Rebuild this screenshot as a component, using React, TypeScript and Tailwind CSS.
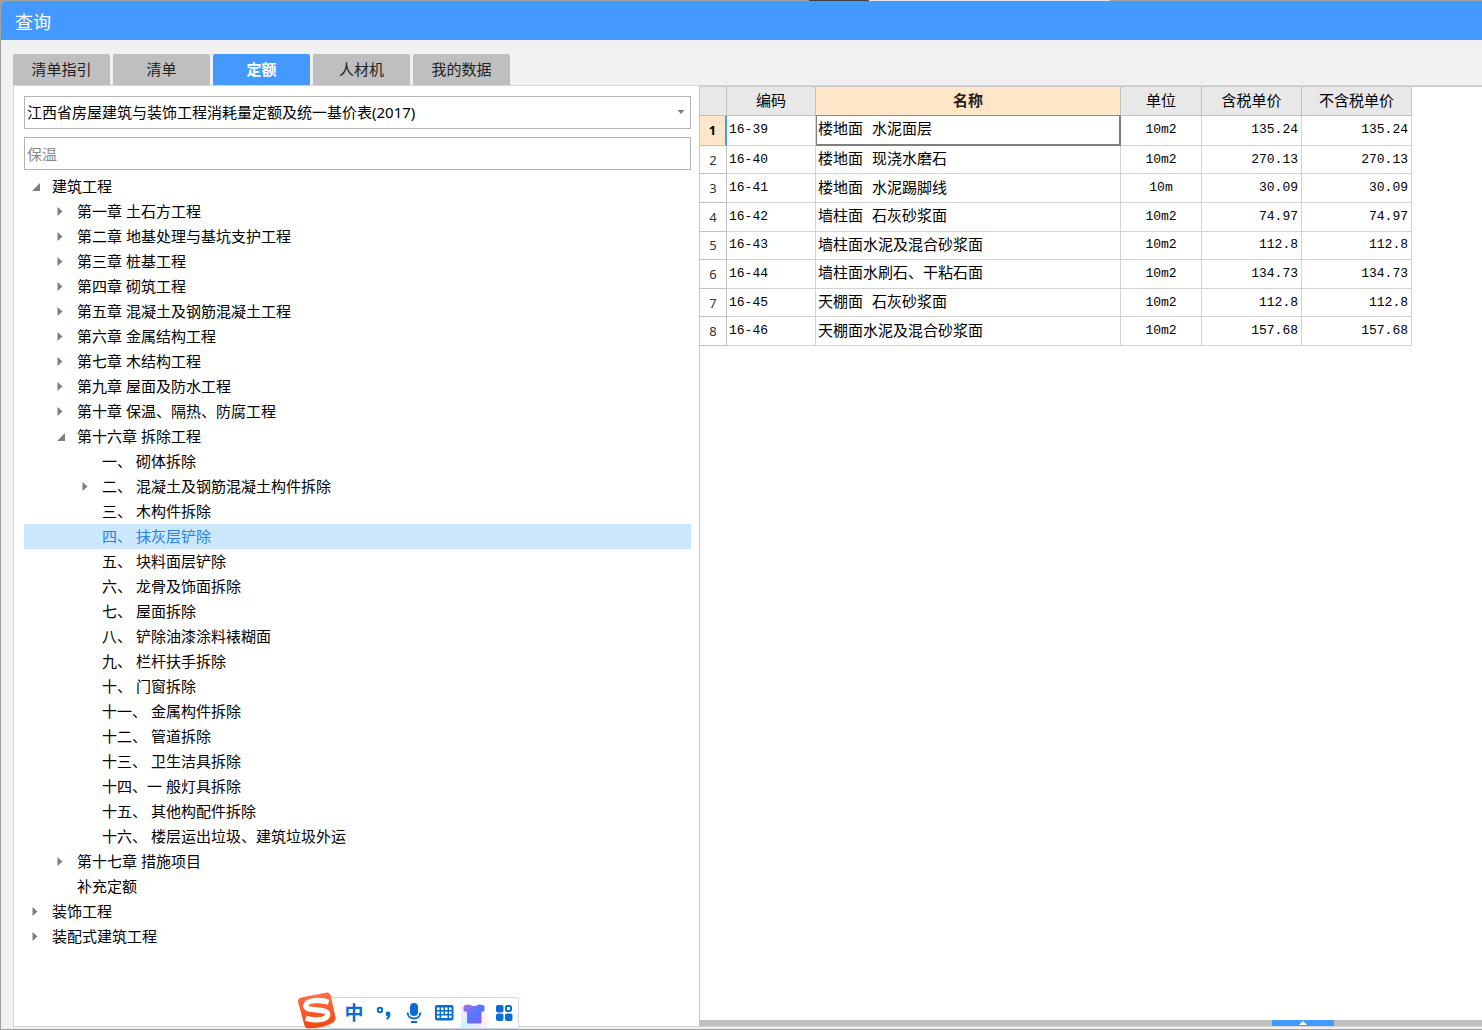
import { useState } from 'react';
import clsx from 'clsx';

const tabs = ['清单指引', '清单', '定额', '人材机', '我的数据'];

type TreeRow = {
  label: string;
  level: 0 | 1 | 2;
  state?: 'open' | 'closed';
};

const tree: TreeRow[] = [
  { label: '建筑工程', level: 0, state: 'open' },
  { label: '第一章 土石方工程', level: 1, state: 'closed' },
  { label: '第二章 地基处理与基坑支护工程', level: 1, state: 'closed' },
  { label: '第三章 桩基工程', level: 1, state: 'closed' },
  { label: '第四章 砌筑工程', level: 1, state: 'closed' },
  { label: '第五章 混凝土及钢筋混凝土工程', level: 1, state: 'closed' },
  { label: '第六章 金属结构工程', level: 1, state: 'closed' },
  { label: '第七章 木结构工程', level: 1, state: 'closed' },
  { label: '第九章 屋面及防水工程', level: 1, state: 'closed' },
  { label: '第十章 保温、隔热、防腐工程', level: 1, state: 'closed' },
  { label: '第十六章 拆除工程', level: 1, state: 'open' },
  { label: '一、 砌体拆除', level: 2 },
  { label: '二、 混凝土及钢筋混凝土构件拆除', level: 2, state: 'closed' },
  { label: '三、 木构件拆除', level: 2 },
  { label: '四、 抹灰层铲除', level: 2 },
  { label: '五、 块料面层铲除', level: 2 },
  { label: '六、 龙骨及饰面拆除', level: 2 },
  { label: '七、 屋面拆除', level: 2 },
  { label: '八、 铲除油漆涂料裱糊面', level: 2 },
  { label: '九、 栏杆扶手拆除', level: 2 },
  { label: '十、 门窗拆除', level: 2 },
  { label: '十一、 金属构件拆除', level: 2 },
  { label: '十二、 管道拆除', level: 2 },
  { label: '十三、 卫生洁具拆除', level: 2 },
  { label: '十四、一 般灯具拆除', level: 2 },
  { label: '十五、 其他构配件拆除', level: 2 },
  { label: '十六、 楼层运出垃圾、建筑垃圾外运', level: 2 },
  { label: '第十七章 措施项目', level: 1, state: 'closed' },
  { label: '补充定额', level: 1 },
  { label: '装饰工程', level: 0, state: 'closed' },
  { label: '装配式建筑工程', level: 0, state: 'closed' },
];

const quotas = [
  { code: '16-39', name: '楼地面 水泥面层', unit: '10m2', price: '135.24' },
  { code: '16-40', name: '楼地面 现浇水磨石', unit: '10m2', price: '270.13' },
  { code: '16-41', name: '楼地面 水泥踢脚线', unit: '10m', price: '30.09' },
  { code: '16-42', name: '墙柱面 石灰砂浆面', unit: '10m2', price: '74.97' },
  { code: '16-43', name: '墙柱面水泥及混合砂浆面', unit: '10m2', price: '112.8' },
  { code: '16-44', name: '墙柱面水刷石、干粘石面', unit: '10m2', price: '134.73' },
  { code: '16-45', name: '天棚面 石灰砂浆面', unit: '10m2', price: '112.8' },
  { code: '16-46', name: '天棚面水泥及混合砂浆面', unit: '10m2', price: '157.68' },
];

const indent = {
  0: 'pl-[7px]',
  1: 'pl-8',
  2: 'pl-[57px]',
};

function Arrow({ state }: { state?: 'open' | 'closed' }) {
  return (
    <svg className="h-3 w-3 shrink-0" viewBox="0 0 12 12" fill="#7f7f7f">
      {state === 'open' && <path d="M9 3v8H1z" />}
      {state === 'closed' && <path d="M1.500 2v9L6.500 6.500z" />}
    </svg>
  );
}

function QuotaTree() {
  const [selected, setSelected] = useState(14);

  return (
    <ul className="mt-1">
      {tree.map((row, i) => (
        <li key={row.label}>
          <button
            className={clsx(
              'flex h-[25px] w-full items-center gap-[9px] pb-[2px] text-left whitespace-nowrap',
              indent[row.level],
              i === selected ? 'bg-[#cce8ff] text-[#2680eb]' : 'text-black'
            )}
            onClick={() => setSelected(i)}
            type="button"
          >
            <Arrow state={row.state} />
            {row.label}
          </button>
        </li>
      ))}
    </ul>
  );
}

function QuotaTable() {
  const th =
    'border-r border-b border-[#c0c0c0] bg-[#e8e8e8] pb-[2px] font-normal';
  const td = 'border-r border-b border-[#d2d2d2]';
  const mono =
    "font-['Liberation_Mono','Noto_Sans_CJK_SC',monospace] text-[13px]";

  return (
    <table className="h-[259px] w-[712px] table-fixed border-separate border-spacing-0 text-black">
      <colgroup>
        <col className="w-[27px]" />
        <col className="w-[89px]" />
        <col className="w-[305px]" />
        <col className="w-[81px]" />
        <col className="w-[100px]" />
        <col className="w-[110px]" />
      </colgroup>
      <thead>
        <tr className="h-[29px]">
          <th className={th} aria-label="序号" />
          <th className={th}>编码</th>
          <th className="border-r border-b border-r-[#c0c0c0] border-b-[#4499ff] bg-[#ffe6c8] pb-[2px] font-bold text-[#222]">
            名称
          </th>
          <th className={th}>单位</th>
          <th className={th}>含税单价</th>
          <th className={th}>不含税单价</th>
        </tr>
      </thead>
      <tbody>
        {quotas.map((q, i) => (
          <tr key={q.code}>
            <th
              className={clsx(
                'border-b border-[#c0c0c0] text-[13px]',
                i === 0
                  ? 'border-r-2 border-r-[#4499ff] bg-[#ffe6c8] font-bold'
                  : 'border-r font-normal text-[#333]'
              )}
              scope="row"
            >
              {i + 1}
            </th>
            <td className={clsx(td, mono, 'pl-[2px]')}>{q.code}</td>
            <td
              className={clsx(
                "pt-[3px] font-['Liberation_Mono','Noto_Sans_CJK_SC',monospace] whitespace-nowrap",
                i === 0
                  ? 'border-r-2 border-b-2 border-l border-[#7f7f7f] pl-px'
                  : 'border-r border-b border-[#d2d2d2] pl-[2px]'
              )}
            >
              {q.name}
            </td>
            <td className={clsx(td, mono, 'text-center')}>{q.unit}</td>
            <td className={clsx(td, mono, 'pr-[3px] text-right')}>{q.price}</td>
            <td className={clsx(td, mono, 'pr-[3px] text-right')}>{q.price}</td>
          </tr>
        ))}
      </tbody>
    </table>
  );
}

function ImeBar() {
  return (
    <div className="absolute bottom-0 left-[296px] flex h-[37px] items-end">
      <svg className="z-10 h-[37px] w-10 shrink-0" viewBox="0 0 40 38">
        <defs>
          <linearGradient id="sogou" x1="0" y1="0" x2="0" y2="1">
            <stop offset="0" stopColor="#ff7044" />
            <stop offset="1" stopColor="#f04810" />
          </linearGradient>
        </defs>
        <path
          d="M3 6 30 .5Q33 0 34 3L39 26Q39.500 29 37 31Q27 37 11 37.500Q8 37.500 7 34L.5 10Q0 7 3 6Z"
          fill="url(#sogou)"
        />
        <path
          d="M32 10.500C24 7.500 8.500 8 8.500 14.500C8.500 20.500 31 16 31 23C31 29 17 30 8.500 27"
          fill="none"
          stroke="#fff"
          strokeWidth="5.500"
        />
      </svg>
      <div className="-ml-2 flex h-8 w-[190px] items-center justify-between rounded-xs border border-[#c8d8ee] bg-white pr-[4px] pl-[14px] text-[#0a6cd6]">
        <span className="w-5 text-center text-[19px] leading-5 font-bold">中</span>
        <svg className="h-5 w-5" viewBox="0 0 20 20" fill="none" stroke="currentColor">
          <circle cx="6" cy="7" r="2.200" strokeWidth="2" />
          <circle cx="14" cy="11" r="2.400" fill="currentColor" stroke="none" />
          <path d="M15.400 11.500Q15.500 14.500 12.500 16" strokeWidth="2" />
        </svg>
        <svg className="h-5 w-5" viewBox="0 0 20 20" fill="none" stroke="currentColor" strokeWidth="2">
          <rect x="6" y="0" width="8" height="13" rx="4" fill="currentColor" stroke="none" />
          <path d="M3.500 9.500C4 17.500 16 17.500 16.500 9.500M7 19h6" />
        </svg>
        <svg className="h-5 w-5" viewBox="0 0 20 20">
          <rect x="1" y="2" width="18.500" height="15.500" rx="2" fill="currentColor" />
          <path
            d="M3 4.500h2.500V7H3zM7 4.500h2.500V7H7zM11 4.500h2.500V7H11zM15 4.500h2.500V7H15zM3 8.500h2.500V11H3zM7 8.500h2.500V11H7zM11 8.500h2.500V11H11zM15 8.500h2.500V11H15zM3 12.500h2.500V15H3zM7 12.500h6.500V15H7zM15 12.500h2.500V15H15z"
            fill="#fff"
          />
        </svg>
        <svg className="-mx-[3px] h-[30px] w-[26px]" viewBox="0 0 26 30">
          <defs>
            <linearGradient id="shirt" x1="0" y1="0" x2="1" y2="1">
              <stop offset="0" stopColor="#b06af0" />
              <stop offset=".5" stopColor="#4f78ff" />
              <stop offset="1" stopColor="#8a5ee8" />
            </linearGradient>
            <linearGradient id="glow" x1="0" y1="1" x2="1" y2="0">
              <stop offset="0" stopColor="#bdf3ff" />
              <stop offset=".5" stopColor="#fdeaff" />
              <stop offset="1" stopColor="#fff" />
            </linearGradient>
          </defs>
          <path d="M0 8h26v22H0z" fill="url(#glow)" />
          <path
            d="M8.500 6.500q4.500 3.500 9 0l4 .5q2 .2 2 2v3q0 1.500-1.500 1.500L20.500 14V24q0 1.500-1.500 1.500H7.500Q6 25.500 6 24V14L4 13.500Q2.500 13.500 2.500 12V9q0-1.800 2-2z"
            fill="url(#shirt)"
          />
        </svg>
        <svg className="h-5 w-5" viewBox="0 0 20 20" fill="currentColor">
          <rect x="2" y="2" width="7.500" height="7.500" rx="2" />
          <rect x="12" y="3" width="5" height="5" rx="1.500" fill="none" stroke="currentColor" strokeWidth="2" />
          <rect x="2" y="10.500" width="7.500" height="7.500" rx="2" />
          <rect x="11" y="10.500" width="7.500" height="7.500" rx="2" />
        </svg>
      </div>
    </div>
  );
}

export default function App() {
  const [tab, setTab] = useState('定额');

  return (
    <div className="relative flex min-h-screen flex-col border-b border-l border-[#a0a0a0] bg-[#f1f1f1] font-['Noto_Sans','Noto_Sans_CJK_SC',sans-serif] text-[15px] leading-5">
      <div className="flex h-px bg-[#a0a0a0]">
        <div className="ml-[808px] w-[60px] bg-[#404040]" />
        <div className="w-[241px] bg-[#e6e6e6]" />
      </div>

      <div className="bg-[#a0a0a0]">
        <header className="flex h-[39px] items-center rounded-tl-md bg-[#4499ff] pt-[2px] pl-[14px] text-white">
          <h1 className="text-lg">查询</h1>
        </header>
      </div>

      <nav className="flex gap-[3px] pt-[14px] pl-3">
        {tabs.map((name) => (
          <button
            key={name}
            className={clsx(
              'h-[31px] w-[97px] rounded-t-xs pb-[2px]',
              name === tab
                ? 'bg-[#4499ff] font-bold text-white'
                : 'bg-[#bfbfbf] text-[#222]'
            )}
            onClick={() => setTab(name)}
            type="button"
          >
            {name}
          </button>
        ))}
      </nav>

      <main className="mb-[2px] ml-3 flex flex-1 border-t border-b border-l border-[#d4d4d4] bg-white">
        <section className="w-[686px] shrink-0 border-r border-[#c8c8c8] pt-[10px] pr-2 pl-[10px]">
          <div className="relative">
            <select
              aria-label="定额库"
              className="h-[33px] w-full appearance-none border border-[#b4b4b4] bg-white pb-[2px] pl-[2px] text-black"
            >
              <option>江西省房屋建筑与装饰工程消耗量定额及统一基价表(2017)</option>
            </select>
            <svg
              className="pointer-events-none absolute top-[14px] right-[6px] h-1 w-2"
              viewBox="0 0 8 4"
              fill="#7f7f7f"
            >
              <path d="M.5 0h7L4 4z" />
            </svg>
          </div>
          <input
            aria-label="搜索定额"
            className="mt-2 block h-[33px] w-full border border-[#b4b4b4] pl-[2px] text-[#7f7f7f] placeholder:text-[#8a8a8a]"
            placeholder="保温"
            type="text"
          />
          <QuotaTree />
        </section>

        <section className="flex flex-1 flex-col justify-between">
          <div className="border-t border-[#c8c8c8]">
            <QuotaTable />
          </div>
          <div className="flex h-[6px] justify-end bg-[#bfbfbf] pr-[148px]">
            <button
              aria-label="展开"
              className="flex h-[6px] w-[62px] items-center justify-center bg-[#4499ff]"
              type="button"
            >
              <svg className="h-1 w-2" viewBox="0 0 8 4" fill="#fff">
                <path d="M4 0 8 4H0z" />
              </svg>
            </button>
          </div>
        </section>
      </main>

      <ImeBar />
    </div>
  );
}
